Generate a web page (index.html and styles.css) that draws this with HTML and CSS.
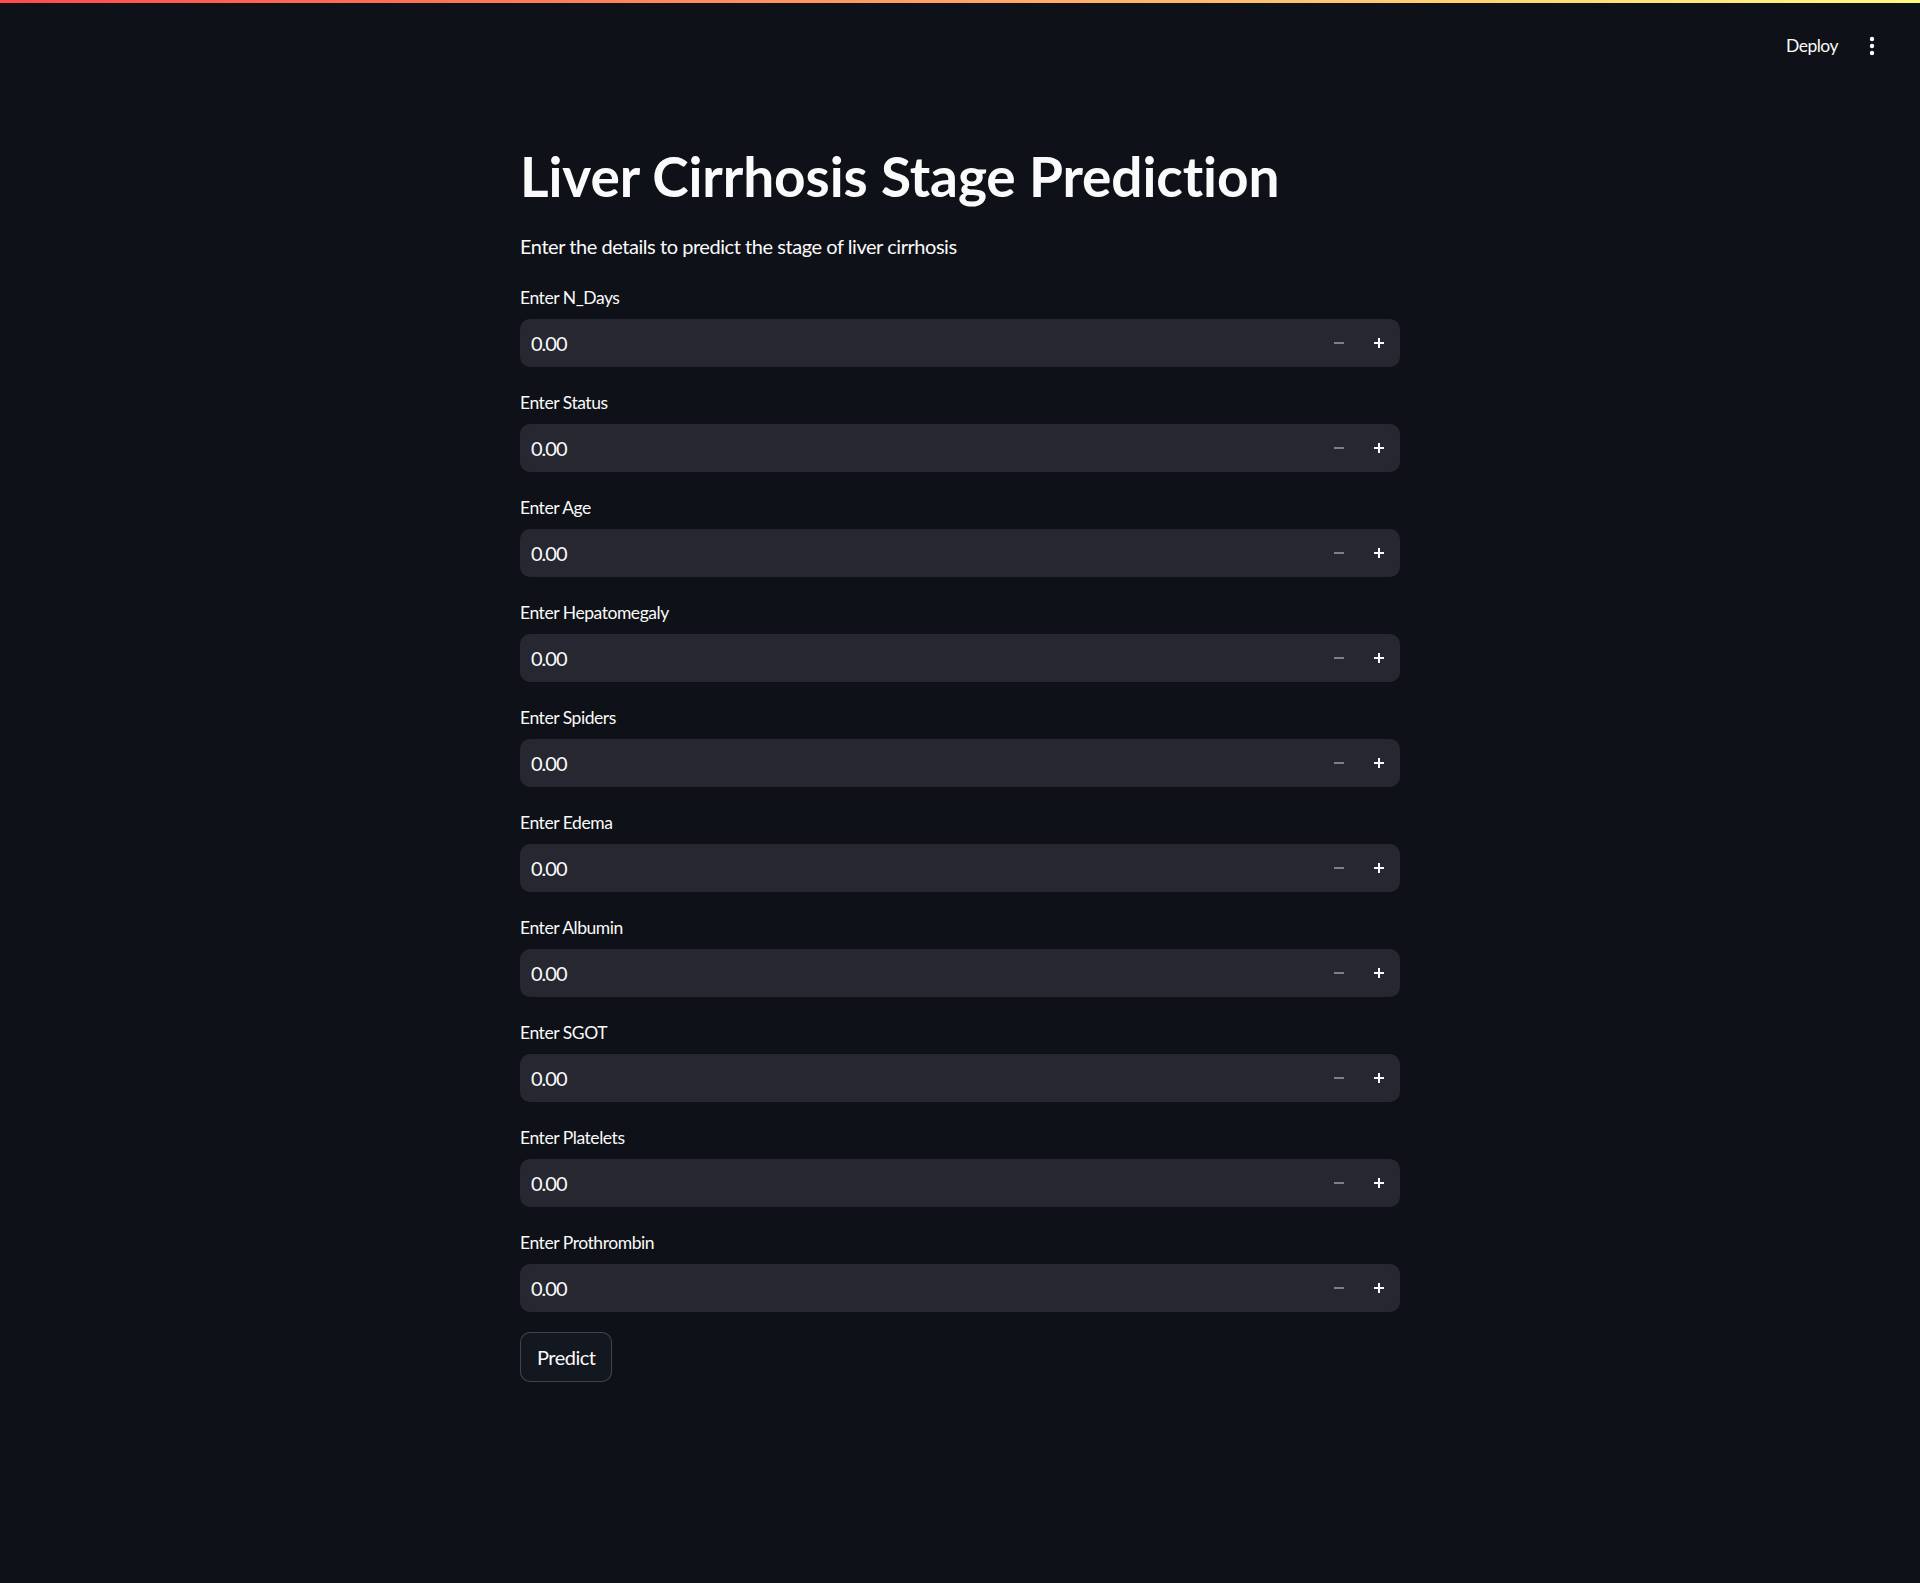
FILE: index.html
```html
<!DOCTYPE html>
<html lang="en">
<head>
<meta charset="utf-8">
<title>Liver Cirrhosis Stage Prediction</title>
<link rel="stylesheet" href="styles.css">
</head>
<body>
<div class="decoration"></div>
<header class="header">
  <span class="deploy">Deploy</span>
  <span class="menu" aria-label="Main menu">
    <svg width="6" height="20" viewBox="0 0 6 20"><circle cx="3" cy="3" r="2.2" fill="#fafafa"/><circle cx="3" cy="10" r="2.2" fill="#fafafa"/><circle cx="3" cy="17" r="2.2" fill="#fafafa"/></svg>
  </span>
</header>
<main class="main">
  <h1 class="title">Liver Cirrhosis Stage Prediction</h1>
  <p class="intro">Enter the details to predict the stage of liver cirrhosis</p>
  <div class="fields">
    <div class="field"><label class="label">Enter N_Days</label><div class="input"><span class="value">0.00</span><span class="step minus"><i></i></span><span class="step plus"><i></i><b></b></span></div></div>
    <div class="field"><label class="label">Enter Status</label><div class="input"><span class="value">0.00</span><span class="step minus"><i></i></span><span class="step plus"><i></i><b></b></span></div></div>
    <div class="field"><label class="label">Enter Age</label><div class="input"><span class="value">0.00</span><span class="step minus"><i></i></span><span class="step plus"><i></i><b></b></span></div></div>
    <div class="field"><label class="label">Enter Hepatomegaly</label><div class="input"><span class="value">0.00</span><span class="step minus"><i></i></span><span class="step plus"><i></i><b></b></span></div></div>
    <div class="field"><label class="label">Enter Spiders</label><div class="input"><span class="value">0.00</span><span class="step minus"><i></i></span><span class="step plus"><i></i><b></b></span></div></div>
    <div class="field"><label class="label">Enter Edema</label><div class="input"><span class="value">0.00</span><span class="step minus"><i></i></span><span class="step plus"><i></i><b></b></span></div></div>
    <div class="field"><label class="label">Enter Albumin</label><div class="input"><span class="value">0.00</span><span class="step minus"><i></i></span><span class="step plus"><i></i><b></b></span></div></div>
    <div class="field"><label class="label">Enter SGOT</label><div class="input"><span class="value">0.00</span><span class="step minus"><i></i></span><span class="step plus"><i></i><b></b></span></div></div>
    <div class="field"><label class="label">Enter Platelets</label><div class="input"><span class="value">0.00</span><span class="step minus"><i></i></span><span class="step plus"><i></i><b></b></span></div></div>
    <div class="field"><label class="label">Enter Prothrombin</label><div class="input"><span class="value">0.00</span><span class="step minus"><i></i></span><span class="step plus"><i></i><b></b></span></div></div>
  </div>
  <button class="predict" type="button">Predict</button>
</main>
</body>
</html>
```
FILE: styles.css
```css
* { box-sizing: border-box; }
html, body { margin: 0; padding: 0; }
body {
  background: #0e1117;
  color: #fafafa;
  font-family: Lato, "Noto Sans", sans-serif;
  min-height: 1583px;
}
.decoration {
  height: 3px;
  background: linear-gradient(90deg, #ff4b4b, #fffd80);
}
.header {
  height: 86px;
  display: flex;
  justify-content: flex-end;
  align-items: center;
  gap: 31px;
  padding: 0 45px 0 0;
}
.deploy {
  font-size: 17.5px;
  line-height: 22px;
  letter-spacing: -0.5px;
}
.menu { display: flex; align-items: center; height: 20px; }
.main {
  width: 880px;
  margin: 54px auto 0;
}
.title {
  margin: 0;
  font-size: 55px;
  line-height: 66px;
  font-weight: 700;
  letter-spacing: -0.1px;
}
.intro {
  margin: 21px 0 0;
  font-size: 20px;
  line-height: 32px;
  letter-spacing: -0.45px;
}
.fields {
  margin-top: 25px;
  display: flex;
  flex-direction: column;
  gap: 25px;
}
.field { display: flex; flex-direction: column; gap: 10px; }
.label {
  font-size: 17.5px;
  line-height: 22px;
  letter-spacing: -0.45px;
}
.input {
  height: 48px;
  background: #262730;
  border-radius: 10px;
  display: flex;
  align-items: center;
}
.value {
  flex: 1;
  padding-left: 11px;
  font-size: 20px;
  line-height: 24px;
  letter-spacing: -1px;
}
.step {
  width: 40px;
  height: 48px;
  position: relative;
}
.step i, .step b {
  position: absolute;
  left: 14px;
  top: 23px;
  width: 10px;
  height: 2px;
}
.minus i { background: #7d7f8c; }
.plus i { background: #fafafa; }
.plus b { background: #fafafa; left: 18px; top: 19px; width: 2px; height: 10px; }
.predict {
  margin-top: 20px;
  height: 50px;
  padding: 0 16px;
  background: #131720;
  color: #fafafa;
  border: 1px solid rgba(250, 250, 250, 0.2);
  border-radius: 10px;
  font-family: Lato, "Noto Sans", sans-serif;
  font-size: 20px;
  letter-spacing: -0.5px;
}
```
